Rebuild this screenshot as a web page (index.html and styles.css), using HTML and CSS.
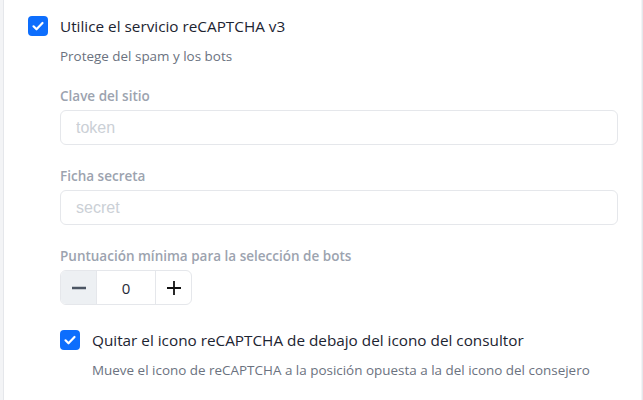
FILE: index.html
```html
<!DOCTYPE html>
<html lang="es">
<head>
<meta charset="utf-8">
<link rel="stylesheet" href="styles.css">
</head>
<body>
<div class="frame">
  <div class="panel">
    <div class="check-row">
      <span class="checkbox">
        <svg viewBox="0 0 20 20" width="20" height="20"><path d="M5.5 10.3l3 3 6-6.3" fill="none" stroke="#fff" stroke-width="2.2" stroke-linecap="round" stroke-linejoin="round"/></svg>
      </span>
      <div class="check-text">
        <div class="check-title">Utilice el servicio reCAPTCHA v3</div>
        <div class="check-desc">Protege del spam y los bots</div>
      </div>
    </div>
    <div class="fields">
      <div class="field">
        <label class="label">Clave del sitio</label>
        <input class="input" placeholder="token">
      </div>
      <div class="field">
        <label class="label">Ficha secreta</label>
        <input class="input" placeholder="secret">
      </div>
      <div class="field">
        <label class="label">Puntuación mínima para la selección de bots</label>
        <div class="stepper">
          <span class="step minus"><svg viewBox="0 0 16 16" width="16" height="16"><path d="M1 8h14" stroke="#4b5563" stroke-width="2.4"/></svg></span>
          <span class="step-value">0</span>
          <span class="step plus"><svg viewBox="0 0 16 16" width="16" height="16"><path d="M1 8h14M8 1v14" stroke="#111" stroke-width="1.8"/></svg></span>
        </div>
      </div>
      <div class="check-row sub">
        <span class="checkbox">
          <svg viewBox="0 0 20 20" width="20" height="20"><path d="M5.5 10.3l3 3 6-6.3" fill="none" stroke="#fff" stroke-width="2.2" stroke-linecap="round" stroke-linejoin="round"/></svg>
        </span>
        <div class="check-text">
          <div class="check-title">Quitar el icono reCAPTCHA de debajo del icono del consultor</div>
          <div class="check-desc">Mueve el icono de reCAPTCHA a la posición opuesta a la del icono del consejero</div>
        </div>
      </div>
    </div>
  </div>
</div>
</body>
</html>
```
FILE: styles.css
```css
html, body {
  margin: 0;
  padding: 0;
  background: #fff;
}
body {
  font-family: "Open Sans", "Noto Sans", sans-serif;
  color: #1f2937;
}
.frame {
  height: 400px;
  box-sizing: border-box;
  border-left: 3px solid #f3f4f6;
  border-right: 2px solid #f3f4f6;
  display: flex;
}
.panel {
  flex: 1;
  border-left: 1px solid #e5e7eb;
  border-right: 1px solid #e5e7eb;
  padding: 16px 24px 0 24px;
}
.check-row {
  display: flex;
  gap: 12px;
  align-items: flex-start;
}
.checkbox {
  width: 20px;
  height: 20px;
  border-radius: 4px;
  background: #0d6efd;
  flex: none;
  display: flex;
}
.check-title {
  font-size: 15.3px;
  line-height: 20px;
  color: #1c2431;
}
.check-desc {
  font-size: 13.45px;
  line-height: 18px;
  color: #6b7280;
  margin-top: 11px;
}
.fields {
  padding-left: 32px;
  margin-top: 22px;
  display: flex;
  flex-direction: column;
  gap: 22px;
}
.field {
  display: flex;
  flex-direction: column;
  gap: 5px;
}
.label {
  font-family: "Open Sans", sans-serif;
  font-weight: 600;
  font-size: 13.5px;
  line-height: 18px;
  color: #9ca3af;
}
.input {
  height: 35px;
  box-sizing: border-box;
  border: 1px solid #e5e7eb;
  border-radius: 6px;
  padding: 0 15px;
  font-family: Arimo, "Liberation Sans", sans-serif;
  font-size: 16px;
  width: 558px;
  outline: none;
}
.input::placeholder {
  color: #cbd0d6;
}
.stepper {
  display: flex;
  width: 132px;
  height: 35px;
  box-sizing: border-box;
  border: 1px solid #e5e7eb;
  border-radius: 6px;
  overflow: hidden;
}
.step {
  width: 35px;
  display: flex;
  align-items: center;
  justify-content: center;
}
.minus {
  background: #edf0f3;
  border-right: 1px solid #e5e7eb;
}
.plus {
  border-left: 1px solid #e5e7eb;
}
.step-value {
  flex: 1;
  display: flex;
  align-items: center;
  justify-content: center;
  font-size: 15px;
  color: #1f2937;
}
.check-row.sub {
  margin-top: 3px;
}
```
